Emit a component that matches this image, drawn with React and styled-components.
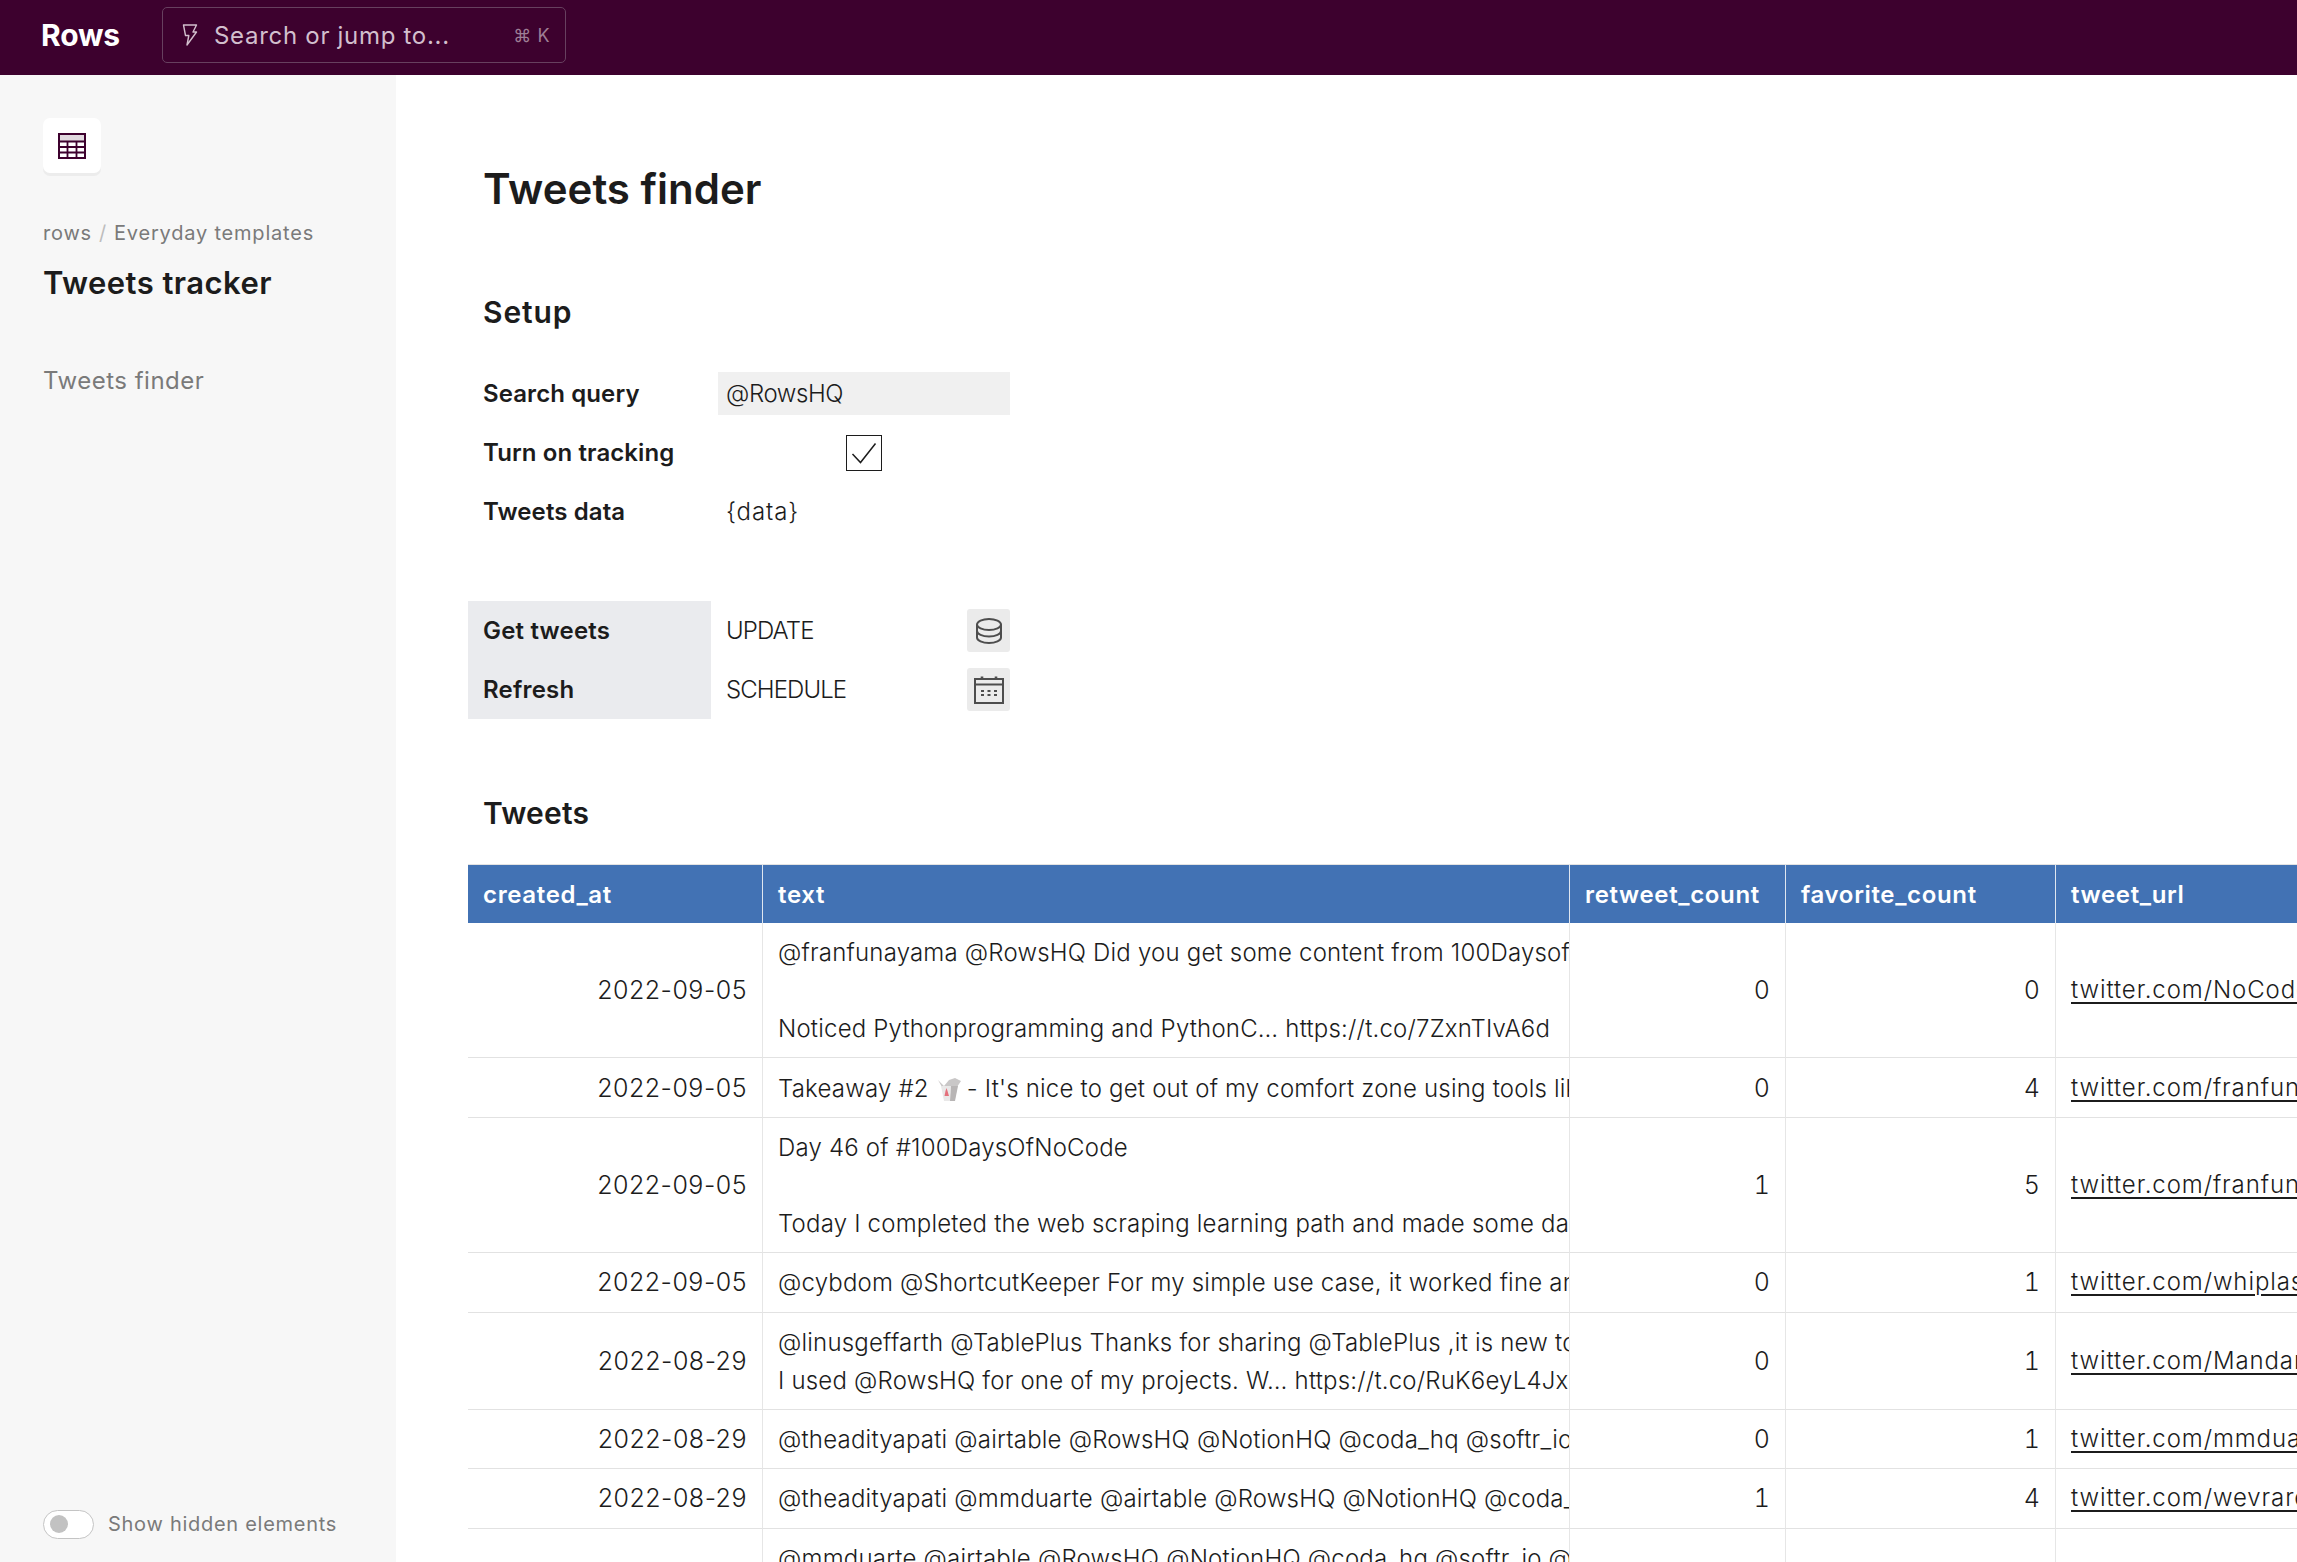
import React from "react";
import styled, { createGlobalStyle } from "styled-components";

const Global = createGlobalStyle`
  html, body { margin: 0; padding: 0; height: 100%; background: #fff; overflow: hidden; }
  body { font-family: Inter, "Noto Sans", sans-serif; color: #1c1c1c; }
  * { box-sizing: border-box; }
`;
const Page = styled.div`display: flex; flex-direction: column; width: 2297px; height: 1562px; overflow: hidden;`;
const TopBar = styled.header`display: flex; align-items: center; flex: 0 0 75px; background: #3d012e; padding: 0 0 5px 41px;`;
const Logo = styled.div`width: 121px; color: #fff; font-size: 30px; font-weight: 700; letter-spacing: -0.2px;`;
const SearchBox = styled.div`
  display: flex; align-items: center; width: 404px; height: 56px; padding: 0 15px 0 19px;
  border: 1px solid #67405f; border-radius: 5px; color: #d2bfcd;
`;
const SearchLabel = styled.span`flex: 1; margin-left: 16px; font-size: 24px; letter-spacing: 0.7px; font-weight: 400;`;
const Shortcut = styled.span`font-size: 18px; color: #9d7e95; letter-spacing: 0.5px;`;
const Body = styled.div`display: flex; flex: 1; min-height: 0;`;
const Sidebar = styled.aside`display: flex; flex-direction: column; flex: 0 0 396px; background: #f7f7f7; padding: 43px 0 0 43px;`;
const IconCard = styled.div`
  display: flex; align-items: center; justify-content: center; width: 58px; height: 55px; border-radius: 7px;
  background: #fff; box-shadow: 0 3px 0 #ececec;
`;
const Crumbs = styled.div`margin-top: 47px; font-size: 20px; line-height: 26px; color: #7a7a7a; letter-spacing: 0.8px;`;
const CrumbSep = styled.span`margin: 0 7px; color: #bdbdbd;`;
const DocTitle = styled.div`margin-top: 18px; font-size: 31px; line-height: 38px; font-weight: 600; color: #1c1c1c; letter-spacing: 0.45px;`;
const NavItem = styled.div`margin-top: 61px; font-size: 24px; line-height: 36px; color: #7a7a7a; letter-spacing: 0.5px;`;
const SideFooter = styled.div`display: flex; align-items: center; margin-top: auto; height: 30px; margin-bottom: 23px; gap: 14px;`;
const Toggle = styled.div`
  display: flex; align-items: center; width: 51px; height: 29px; padding-left: 6px;
  border: 1px solid #c4c4c4; border-radius: 15px; background: #fff;
`;
const Knob = styled.span`width: 18px; height: 18px; border-radius: 50%; background: #c2c2c2;`;
const FooterLabel = styled.span`font-size: 20px; color: #7a7a7a; letter-spacing: 0.72px;`;
const Main = styled.main`flex: 1; min-width: 0; padding: 0 0 0 72px; overflow: hidden;`;
const PageTitle = styled.h1`margin: 85px 0 0 15px; font-size: 42px; line-height: 58px; font-weight: 600; letter-spacing: 0;`;
const SectionTitle = styled.h2`margin: ${p => p.$top}px 0 0 15px; font-size: 30px; line-height: 40px; font-weight: 600; letter-spacing: ${p => p.$ls}px;`;
const FormGrid = styled.div`display: grid; grid-template-columns: 250px 292px; grid-auto-rows: 59px; margin-top: 32px; width: 542px;`;
const FieldLabel = styled.div`display: flex; align-items: center; padding-left: 15px; font-size: 24px; font-weight: 600; letter-spacing: 0.1px;`;
const FieldValue = styled.div`display: flex; align-items: center; padding-left: 8px; font-size: 24px; font-weight: 300; letter-spacing: 0.9px;`;
const InputValue = styled(FieldValue)`height: 43px; background: #f0f0f0; align-self: center; letter-spacing: -0.4px;`;
const CheckCell = styled.div`display: flex; align-items: center; justify-content: center;`;
const CheckBox = styled.div`
  display: flex; align-items: center; justify-content: center; width: 36px; height: 36px;
  border: 1px solid #1c1c1c; background: #fff;
`;
const ActionGrid = styled.div`display: grid; grid-template-columns: 243px 299px; grid-auto-rows: 59px; margin-top: 60px; width: 542px;`;
const ActionLabel = styled.div`display: flex; align-items: center; padding-left: 15px; background: #eaebee; font-size: 24px; font-weight: 600; letter-spacing: 0.2px;`;
const ActionValue = styled.div`display: flex; align-items: center; justify-content: space-between; padding-left: 15px; font-size: 24px; font-weight: 300; letter-spacing: -0.9px;`;
const IconButton = styled.div`display: flex; align-items: center; justify-content: center; width: 43px; height: 43px; border-radius: 3px; background: #ebebeb;`;
const Table = styled.table`
  margin-top: 31px; width: 2000px; table-layout: fixed; border-collapse: separate; border-spacing: 0;
`;
const Th = styled.th`
  height: 59px; padding: 0 0 0 15px; background: #4272b4; color: #fff; text-align: left;
  font-size: 24px; font-weight: 600; letter-spacing: 0.65px;
  border-right: 1px solid #dfe6f0; border-top: 1px solid #e3e3e3;
  width: ${p => p.$w}px;
`;
const Td = styled.td`
  padding: 10.2px ${p => (p.$num ? 15 : 0)}px 10.2px 15px; border-bottom: 1px solid #e2e2e2; border-right: 1px solid #e6e6e6;
  font-size: ${p => (p.$num ? 25 : 24)}px; line-height: 38px; font-weight: 300; letter-spacing: ${p => (p.$num ? 0.5 : 0.2)}px;
  white-space: nowrap; overflow: hidden;
  text-align: ${p => (p.$num ? "right" : "left")}; vertical-align: middle;
`;
const CountCell = styled(Td)`font-variant-numeric: tabular-nums; letter-spacing: 0.2px;`;
const TextLine = styled.div`height: 38px; line-height: 40px; white-space: pre;`;
const Link = styled.a`color: #1c1c1c; letter-spacing: 0.9px; text-decoration: underline; text-decoration-thickness: 2px; text-underline-offset: 4px;`;

const Bolt = () => (
  <svg width="16" height="22" viewBox="0 0 16 22" fill="none" stroke="#d2bfcd" strokeWidth="1.4" strokeLinejoin="round">
    <path d="M1.5 1h13l-3.5 7h3.5L5 21l1.8-9.5H3.5z" />
  </svg>
);
const GridIcon = () => (
  <svg width="28" height="26" viewBox="0 0 28 26" fill="none">
    <rect x="1" y="1" width="26" height="24" fill="#fff" stroke="#3d012e" strokeWidth="2" />
    <rect x="2" y="2" width="24" height="6" fill="#e1d9df" />
    <path d="M1 8.5h26M1 14h26M1 19.5h26M9.5 8.5V25M18.5 8.5V25" stroke="#3d012e" strokeWidth="1.8" />
  </svg>
);
const Check = () => (
  <svg width="26" height="22" viewBox="0 0 26 22" fill="none" stroke="#1c1c1c" strokeWidth="1.5">
    <path d="M1.5 12l8 8.5L24.5 1.5" />
  </svg>
);
const Db = () => (
  <svg width="28" height="28" viewBox="0 0 28 28" fill="none" stroke="#4d4d4d" strokeWidth="2">
    <ellipse cx="14" cy="7.5" rx="12" ry="5.5" />
    <path d="M2 7.5v13c0 3 5.4 5.5 12 5.5s12-2.5 12-5.5v-13" />
    <path d="M2 14c0 3 5.4 5.5 12 5.5s12-2.5 12-5.5" />
  </svg>
);
const Cal = () => (
  <svg width="30" height="28" viewBox="0 0 30 28" fill="none" stroke="#4d4d4d" strokeWidth="2">
    <rect x="1" y="3" width="28" height="24" />
    <path d="M1 8.5h28" />
    <path d="M8 0.5v3.5M22 0.5v3.5" strokeWidth="2.6" />
    <path d="M7 15h3M13.5 15h3M20 15h3M7 19h3M13.5 19h3M20 19h3" strokeWidth="2" />
  </svg>
);
const TakeoutIcon = styled.svg`vertical-align: -5px; margin: 0 5px 0 1px;`;
const TakeoutBox = () => (
  <TakeoutIcon width="25" height="25" viewBox="0 0 25 25">
    <path d="M1 3l6 6 5-6 6-2 6 3-4 6H5z" fill="#c9c7c7" />
    <path d="M4 9h10l-1 15H7z" fill="#e9e8e8" />
    <path d="M14 9h7l-3 15h-5z" fill="#b8b5b5" />
    <path d="M9.5 11l1 3 1.5 5H7.5l1-5z" fill="#e4707c" />
  </TakeoutIcon>
);

const rows = [
  { date: "2022-09-05", lines: ["@franfunayama @RowsHQ Did you get some content from 100Daysof Code?", " ", "Noticed Pythonprogramming and PythonC… https://t.co/7ZxnTIvA6d"], rt: 0, fav: 0, url: "twitter.com/NoCodeDevs/status" },
  { date: "2022-09-05", lines: [<React.Fragment key="a">Takeaway #2 <TakeoutBox />- It's nice to get out of my comfort zone using tools like</React.Fragment>], rt: 0, fav: 4, url: "twitter.com/franfunayama/status" },
  { date: "2022-09-05", lines: ["Day 46 of #100DaysOfNoCode", " ", "Today I completed the web scraping learning path and made some data"], rt: 1, fav: 5, url: "twitter.com/franfunayama/status" },
  { date: "2022-09-05", lines: ["@cybdom @ShortcutKeeper For my simple use case, it worked fine and"], rt: 0, fav: 1, url: "twitter.com/whiplash/status" },
  { date: "2022-08-29", lines: ["@linusgeffarth @TablePlus Thanks for sharing @TablePlus ,it is new to me", "I used @RowsHQ for one of my projects. W… https://t.co/RuK6eyL4Jx"], rt: 0, fav: 1, url: "twitter.com/Mandar/status" },
  { date: "2022-08-29", lines: ["@theadityapati @airtable @RowsHQ @NotionHQ @coda_hq @softr_io @"], rt: 0, fav: 1, url: "twitter.com/mmduarte/status" },
  { date: "2022-08-29", lines: ["@theadityapati @mmduarte @airtable @RowsHQ @NotionHQ @coda_hq"], rt: 1, fav: 4, url: "twitter.com/wevrare/status" },
  { date: "2022-08-29", lines: ["@mmduarte @airtable @RowsHQ @NotionHQ @coda_hq @softr_io @glide", " ", " ", " "], rt: 0, fav: 1, url: "twitter.com/mmduarte/status" },
];
const cols = [["created_at", 295], ["text", 807], ["retweet_count", 216], ["favorite_count", 270], ["tweet_url", 412]];

export default function App() {
  return (
    <Page>
      <Global />
      <TopBar>
        <Logo>Rows</Logo>
        <SearchBox>
          <Bolt />
          <SearchLabel>Search or jump to...</SearchLabel>
          <Shortcut>⌘ K</Shortcut>
        </SearchBox>
      </TopBar>
      <Body>
        <Sidebar>
          <IconCard><GridIcon /></IconCard>
          <Crumbs>rows<CrumbSep>/</CrumbSep>Everyday templates</Crumbs>
          <DocTitle>Tweets tracker</DocTitle>
          <NavItem>Tweets finder</NavItem>
          <SideFooter>
            <Toggle><Knob /></Toggle>
            <FooterLabel>Show hidden elements</FooterLabel>
          </SideFooter>
        </Sidebar>
        <Main>
          <PageTitle>Tweets finder</PageTitle>
          <SectionTitle $top={74} $ls={0.9}>Setup</SectionTitle>
          <FormGrid>
            <FieldLabel>Search query</FieldLabel>
            <InputValue>@RowsHQ</InputValue>
            <FieldLabel>Turn on tracking</FieldLabel>
            <CheckCell><CheckBox><Check /></CheckBox></CheckCell>
            <FieldLabel>Tweets data</FieldLabel>
            <FieldValue>{"{data}"}</FieldValue>
          </FormGrid>
          <ActionGrid>
            <ActionLabel>Get tweets</ActionLabel>
            <ActionValue>UPDATE<IconButton><Db /></IconButton></ActionValue>
            <ActionLabel>Refresh</ActionLabel>
            <ActionValue>SCHEDULE<IconButton><Cal /></IconButton></ActionValue>
          </ActionGrid>
          <SectionTitle $top={74} $ls={0.2}>Tweets</SectionTitle>
          <Table>
            <thead>
              <tr>{cols.map(([c, w]) => <Th key={c} $w={w}>{c}</Th>)}</tr>
            </thead>
            <tbody>
              {rows.map((r, i) => (
                <tr key={i}>
                  <Td $num>{r.date}</Td>
                  <Td>{r.lines.map((l, j) => <TextLine key={j}>{l}</TextLine>)}</Td>
                  <CountCell $num>{r.rt}</CountCell>
                  <CountCell $num>{r.fav}</CountCell>
                  <Td><Link>{r.url}</Link></Td>
                </tr>
              ))}
            </tbody>
          </Table>
        </Main>
      </Body>
    </Page>
  );
}
